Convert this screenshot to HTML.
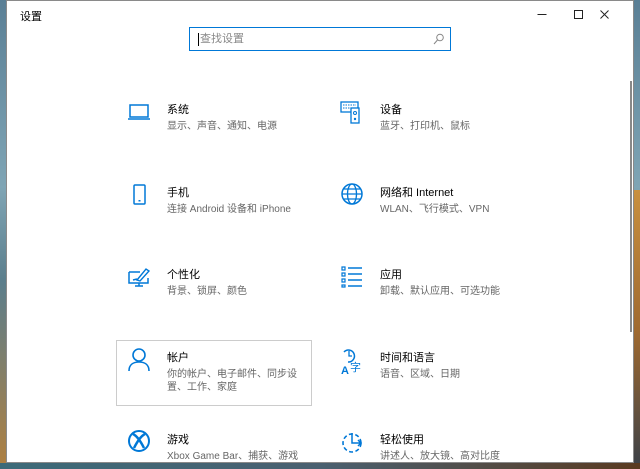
<!DOCTYPE html>
<html><head><meta charset="utf-8"><style>
body{margin:0;width:640px;height:469px;overflow:hidden;position:relative;font-family:"Liberation Sans","Noto Sans CJK SC",sans-serif;
background:linear-gradient(180deg,#5a7f95 0%,#7fa5b5 40%,#5b7e8c 60%,#b08040 100%);}
.bgr{position:absolute;right:0;top:190px;width:8px;height:279px;background:linear-gradient(180deg,#c89040,#a06a30 50%,#3a4048);}
.bgb{position:absolute;left:0;top:463px;width:640px;height:6px;background:linear-gradient(90deg,#3c6a78,#4a6070 50%,#5a3a20);}
.win{position:absolute;left:6px;top:0;width:628px;height:463px;background:#fff;border:1px solid #8a8a8a;box-sizing:border-box;}
.title{position:absolute;left:13px;top:7px;font-size:11px;color:#000;}
.search{position:absolute;left:182px;top:26px;width:262px;height:24px;border:1px solid #0078d7;box-sizing:border-box;}
.search span{position:absolute;left:10px;top:5px;font-size:11px;color:#888;line-height:13px;}
.search i{position:absolute;left:8px;top:5px;width:1px;height:13px;background:#000;}
.scroll{position:absolute;left:623px;top:80px;width:2px;height:251px;background:#888;}
.item{position:absolute;}
.item .t{position:absolute;left:40px;top:-1px;font-size:11px;line-height:13px;color:#000;white-space:nowrap;}
.item .s{position:absolute;left:40px;top:15px;font-size:10px;color:#666;white-space:nowrap;line-height:13px;}
.item svg{position:absolute;left:0;top:-6px;}
.box{position:absolute;left:109px;top:339px;width:196px;height:66px;border:1px solid #ccc;box-sizing:border-box;}
</style></head><body>
<div class="bgr"></div><div class="bgb"></div>
<div class="win">
<div class="title">设置</div>
<svg style="position:absolute;left:530px;top:6px" width="90" height="16">
<path d="M0.5 7.5h9" stroke="#222"/>
<rect x="37.5" y="3.5" width="8" height="8" fill="none" stroke="#222"/>
<path d="M63.5 3.5l8 8M71.5 3.5l-8 8" stroke="#222" stroke-width="1"/>
</svg>
<div class="search"><i></i><span>查找设置</span>
<svg style="position:absolute;right:6px;top:5px" width="11" height="12"><circle cx="7" cy="4.5" r="3.3" fill="none" stroke="#888"/><line x1="4.5" y1="7" x2="1" y2="11" stroke="#888"/></svg></div>
<div class="scroll"></div>
<div class="box"></div>

<div class="item" style="left:120px;top:104px"><svg width="26" height="26"><rect x="3" y="6" width="18" height="12" fill="none" stroke="#0078d7" stroke-width="1.5"/><path d="M1 20h22" stroke="#0078d7" stroke-width="1.5"/></svg><div class="t">系统</div><div class="s">显示、声音、通知、电源</div></div>
<div class="item" style="left:333px;top:104px"><svg width="26" height="30"><rect x="1" y="3" width="17" height="10" fill="none" stroke="#0078d7" stroke-width="1.3"/><path d="M3 6h13M3 9h13" stroke="#0078d7" stroke-dasharray="1.5 1"/><rect x="11" y="9" width="8" height="15" fill="#fff" stroke="#0078d7" stroke-width="1.3"/><circle cx="15" cy="14" r="1.5" fill="none" stroke="#0078d7"/><circle cx="15" cy="20" r="1.2" fill="#0078d7"/></svg><div class="t">设备</div><div class="s">蓝牙、打印机、鼠标</div></div>

<div class="item" style="left:120px;top:187px"><svg width="26" height="28"><rect x="7" y="3" width="11" height="19" rx="1" fill="none" stroke="#0078d7" stroke-width="1.5"/><rect x="11.5" y="18" width="2" height="1.5" fill="#0078d7"/></svg><div class="t">手机</div><div class="s">连接 Android 设备和 iPhone</div></div>
<div class="item" style="left:333px;top:187px"><svg width="28" height="28"><circle cx="12" cy="12" r="10" fill="none" stroke="#0078d7" stroke-width="1.5"/><ellipse cx="12" cy="12" rx="4.5" ry="10" fill="none" stroke="#0078d7" stroke-width="1.3"/><path d="M2 12h20M4 7h16M4 17h16" stroke="#0078d7" stroke-width="1.3"/></svg><div class="t">网络和 Internet</div><div class="s">WLAN、飞行模式、VPN</div></div>

<div class="item" style="left:120px;top:269px"><svg width="28" height="28"><path d="M2 8h11M2 8v11h19v-5M8 22h8M12 19v3" fill="none" stroke="#0078d7" stroke-width="1.5"/><path d="M10 16l9-11 3 2-9 10z" fill="none" stroke="#0078d7" stroke-width="1.4"/><path d="M6 16l4-1" stroke="#0078d7" stroke-width="1.5"/></svg><div class="t">个性化</div><div class="s">背景、锁屏、颜色</div></div>
<div class="item" style="left:333px;top:269px"><svg width="28" height="28"><path d="M2 3h3v3h-3zM2 9h3v3h-3zM2 15h3v3h-3zM2 21h3v2h-3z" fill="none" stroke="#0078d7" stroke-width="1.2"/><path d="M8 4h14M8 10h14M8 16h14M8 22h14" stroke="#0078d7" stroke-width="1.5"/></svg><div class="t">应用</div><div class="s">卸载、默认应用、可选功能</div></div>

<div class="item" style="left:120px;top:352px"><svg width="28" height="28"><circle cx="12" cy="8" r="6" fill="none" stroke="#0078d7" stroke-width="1.6"/><path d="M2 24c0-6 4-9 10-9s10 3 10 9" fill="none" stroke="#0078d7" stroke-width="1.6"/></svg><div class="t">帐户</div><div class="s">你的帐户、电子邮件、同步设<br>置、工作、家庭</div></div>
<div class="item" style="left:333px;top:352px"><svg width="30" height="30"><path d="M4 5a6 6 0 1 1 4 10" fill="none" stroke="#0078d7" stroke-width="1.5"/><path d="M9 4v5h3" fill="none" stroke="#0078d7" stroke-width="1.3"/><text x="1" y="27" font-size="11" font-weight="bold" fill="#0078d7" font-family="Liberation Sans">A</text><text x="10" y="24" font-size="11" fill="#0078d7" font-family="Noto Sans CJK SC">字</text></svg><div class="t">时间和语言</div><div class="s">语音、区域、日期</div></div>

<div class="item" style="left:120px;top:434px"><svg width="28" height="28"><circle cx="12" cy="12" r="10" fill="none" stroke="#0078d7" stroke-width="2"/><path d="M6 5c4 2 8 8 11 14M18 5c-4 2-8 8-11 14" fill="none" stroke="#0078d7" stroke-width="2.5"/></svg><div class="t">游戏</div><div class="s">Xbox Game Bar、捕获、游戏</div></div>
<div class="item" style="left:333px;top:434px"><svg width="30" height="30"><circle cx="12" cy="14" r="9" fill="none" stroke="#0078d7" stroke-width="1.6" stroke-dasharray="4 2.5"/><path d="M12 4v10h9M18 11l3 3-3 3" fill="none" stroke="#0078d7" stroke-width="1.5"/></svg><div class="t">轻松使用</div><div class="s">讲述人、放大镜、高对比度</div></div>
</div>
</body></html>
